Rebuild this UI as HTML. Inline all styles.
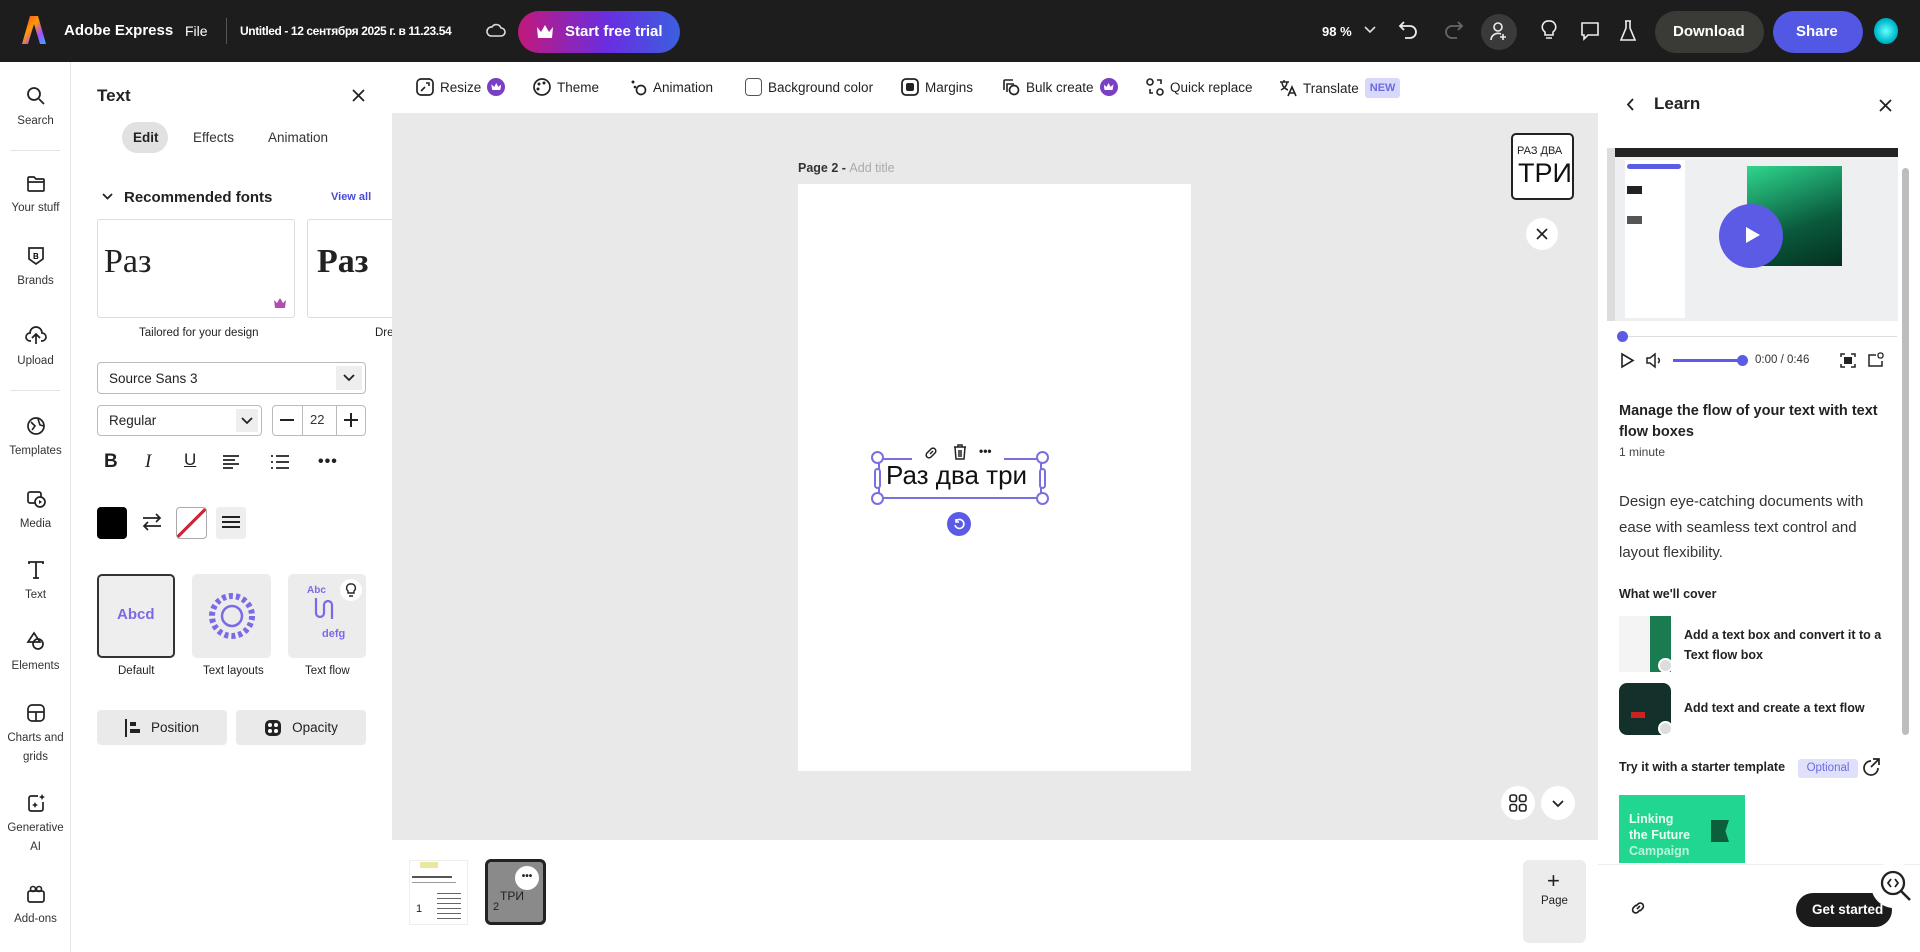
<!DOCTYPE html>
<html><head><meta charset="utf-8">
<style>
*{box-sizing:border-box;margin:0;padding:0}
body{width:1920px;height:952px;overflow:hidden;background:#fff;font-family:"Liberation Sans","DejaVu Sans",sans-serif;color:#222;position:relative}
.a{position:absolute}
.top{left:0;top:0;width:1920px;height:62px;background:#1d1d1d}
.tw{color:#fff;font-size:15px;font-weight:bold;white-space:nowrap}
.rail{left:0;top:62px;width:71px;height:890px;background:#fff;border-right:1px solid #e6e6e6}
.ri{position:absolute;left:0;width:71px;text-align:center;font-size:11.5px;color:#333;line-height:19px}
.ri svg{display:block;margin:0 auto 6px}
.panel{left:71px;top:62px;width:321px;height:890px;background:#fff}
.tb{left:392px;top:62px;width:1206px;height:51px;background:#fff}
.ti{position:absolute;top:15px;font-size:13.5px;color:#222;white-space:nowrap;display:flex;align-items:center;gap:6px}
.crown{width:18px;height:18px;border-radius:50%;background:#7b3fc4;display:inline-block;position:relative}
.crown:after{content:"";position:absolute;left:4px;top:5px;width:10px;height:7px;background:#fff;clip-path:polygon(0 20%,30% 55%,50% 0,70% 55%,100% 20%,90% 100%,10% 100%)}
.btn{background:#eaeaea;border-radius:4px;font-size:13.5px;display:flex;align-items:center;justify-content:center;gap:10px}
.sel{border:1px solid #bbb;border-radius:4px;font-size:13.5px;padding-left:11px;display:flex;align-items:center}
svg{overflow:visible}
</style></head><body>

<!-- TOP BAR -->
<div class="a top"></div>
<svg class="a" style="left:22px;top:16px" width="24" height="28" viewBox="0 0 24 28"><defs><linearGradient id="lg" x1="0" y1="0" x2="1" y2="1"><stop offset="0" stop-color="#ff3b3b"/><stop offset=".4" stop-color="#ff9b00"/><stop offset=".7" stop-color="#a64bff"/><stop offset="1" stop-color="#2bb4ff"/></linearGradient></defs><path d="M8 0h8l8 28h-6l-6-20-6 20H0z" fill="url(#lg)"/></svg>
<div class="a tw" style="left:64px;top:22px;font-size:15px">Adobe Express</div>
<div class="a tw" style="left:185px;top:23px;font-weight:normal;font-size:14px">File</div>
<div class="a" style="left:226px;top:18px;width:1px;height:26px;background:#555"></div>
<div class="a tw" style="left:240px;top:24px;font-size:12px;letter-spacing:-0.4px">Untitled - 12 сентября 2025 г. в 11.23.54</div>
<svg class="a" style="left:486px;top:22px" width="20" height="16" viewBox="0 0 20 16"><path d="M5 14h10a4 4 0 0 0 0-8 5 5 0 0 0-9-1A4.5 4.5 0 0 0 5 14z" fill="none" stroke="#ddd" stroke-width="1.6"/></svg>
<div class="a" style="left:518px;top:11px;width:162px;height:42px;border-radius:21px;background:linear-gradient(90deg,#c2197a,#6a2de0 55%,#3b5fe0)"></div>
<svg class="a" style="left:536px;top:24px" width="18" height="15" viewBox="0 0 18 15"><path d="M1 3l4 5 4-7 4 7 4-5-1 11H2z" fill="#fff"/></svg>
<div class="a tw" style="left:565px;top:23px">Start free trial</div>

<div class="a tw" style="left:1322px;top:24px;font-size:13px">98 %</div>
<svg class="a" style="left:1364px;top:26px" width="12" height="8"><path d="M1 1l5 5 5-5" stroke="#ddd" stroke-width="1.6" fill="none"/></svg>
<svg class="a" style="left:1399px;top:20px" width="20" height="22" viewBox="0 0 20 22"><path d="M5 2L1 6l4 4M1 6h10a6 6 0 0 1 0 12H6" stroke="#eee" stroke-width="1.8" fill="none"/></svg>
<svg class="a" style="left:1443px;top:20px" width="20" height="22" viewBox="0 0 20 22"><path d="M15 2l4 4-4 4M19 6H9a6 6 0 0 0 0 12h5" stroke="#666" stroke-width="1.8" fill="none"/></svg>
<div class="a" style="left:1481px;top:14px;width:36px;height:36px;border-radius:50%;background:#3a3a3a"></div>
<svg class="a" style="left:1490px;top:22px" width="18" height="20" viewBox="0 0 18 20"><circle cx="8" cy="5" r="4" stroke="#eee" stroke-width="1.6" fill="none"/><path d="M1 18a7 7 0 0 1 10-6M13 12v6M10 15h6" stroke="#eee" stroke-width="1.6" fill="none"/></svg>
<svg class="a" style="left:1541px;top:20px" width="16" height="22" viewBox="0 0 16 22"><path d="M8 1a6 6 0 0 0-4 11v3h8v-3A6 6 0 0 0 8 1zM5 18h6" stroke="#eee" stroke-width="1.6" fill="none"/></svg>
<svg class="a" style="left:1580px;top:21px" width="20" height="20" viewBox="0 0 20 20"><path d="M2 2h16v12H8l-4 4v-4H2z" stroke="#eee" stroke-width="1.6" fill="none"/></svg>
<svg class="a" style="left:1620px;top:20px" width="16" height="22" viewBox="0 0 16 22"><path d="M5 1h6M6 1v7L1 20h14L10 8V1" stroke="#eee" stroke-width="1.6" fill="none"/></svg>
<div class="a" style="left:1655px;top:11px;width:109px;height:42px;border-radius:21px;background:#3a3a36"></div>
<div class="a tw" style="left:1673px;top:23px;font-weight:bold">Download</div>
<div class="a" style="left:1773px;top:11px;width:90px;height:42px;border-radius:21px;background:#5258e4"></div>
<div class="a tw" style="left:1796px;top:23px">Share</div>
<div class="a" style="left:1874px;top:18px;width:24px;height:26px;border-radius:50%;background:radial-gradient(circle,#6ff 0,#0bc 60%,#08a)"></div>

<!-- LEFT RAIL -->
<div class="a rail">
 <div class="ri" style="top:24px"><svg width="20" height="20" viewBox="0 0 20 20"><circle cx="8" cy="8" r="6" stroke="#222" stroke-width="1.8" fill="none"/><path d="M13 13l5 5" stroke="#222" stroke-width="1.8"/></svg>Search</div>
 <div class="a" style="left:10px;top:88px;width:50px;height:1px;background:#e3e3e3"></div>
 <div class="ri" style="top:113px"><svg width="20" height="18" viewBox="0 0 20 18"><path d="M2 3a1 1 0 0 1 1-1h5l2 2h7a1 1 0 0 1 1 1v10a1 1 0 0 1-1 1H3a1 1 0 0 1-1-1zM2 7h16" stroke="#222" stroke-width="1.7" fill="none"/></svg>Your stuff</div>
 <div class="ri" style="top:184px"><svg width="18" height="20" viewBox="0 0 18 20"><path d="M2 2h14v11l-7 5-7-5z" stroke="#222" stroke-width="1.7" fill="none"/><text x="6" y="13" font-size="8" font-weight="bold" font-family="Liberation Sans">B</text></svg>Brands</div>
 <div class="ri" style="top:264px"><svg width="22" height="20" viewBox="0 0 22 20"><path d="M6 15H5a4 4 0 0 1 0-8 6 6 0 0 1 12 0 4 4 0 0 1 0 8h-1M11 18V9M7 12l4-4 4 4" stroke="#222" stroke-width="1.7" fill="none"/></svg>Upload</div>
 <div class="a" style="left:10px;top:328px;width:50px;height:1px;background:#e3e3e3"></div>
 <div class="ri" style="top:354px"><svg width="20" height="20" viewBox="0 0 20 20"><circle cx="10" cy="10" r="8" stroke="#222" stroke-width="1.7" fill="none"/><path d="M5 6l4 4-3 4M12 3l2 6 4 1" stroke="#222" stroke-width="1.6" fill="none"/></svg>Templates</div>
 <div class="ri" style="top:427px"><svg width="20" height="20" viewBox="0 0 20 20"><rect x="2" y="3" width="13" height="11" rx="2" stroke="#222" stroke-width="1.7" fill="none"/><circle cx="14" cy="13" r="5" fill="#fff" stroke="#222" stroke-width="1.7"/><path d="M13 11v4l3-2z" fill="#222"/></svg>Media</div>
 <div class="ri" style="top:498px"><svg width="18" height="20" viewBox="0 0 18 20"><path d="M2 4V2h14v2M9 2v16M6 18h6" stroke="#222" stroke-width="1.8" fill="none"/></svg>Text</div>
 <div class="ri" style="top:569px"><svg width="20" height="20" viewBox="0 0 20 20"><path d="M8 2l6 9H2z" stroke="#222" stroke-width="1.7" fill="none"/><circle cx="12" cy="13" r="5" stroke="#222" stroke-width="1.7" fill="none"/></svg>Elements</div>
 <div class="ri" style="top:641px"><svg width="20" height="20" viewBox="0 0 20 20"><rect x="2" y="2" width="16" height="16" rx="4" stroke="#222" stroke-width="1.7" fill="none"/><path d="M2 9h16M10 9v9" stroke="#222" stroke-width="1.7"/></svg>Charts and<br>grids</div>
 <div class="ri" style="top:731px"><svg width="20" height="20" viewBox="0 0 20 20"><path d="M12 3H5a2 2 0 0 0-2 2v11a2 2 0 0 0 2 2h10a2 2 0 0 0 2-2V9" stroke="#222" stroke-width="1.7" fill="none"/><path d="M16 1l1 2 2 1-2 1-1 2-1-2-2-1 2-1zM9 9l1 2 2 1-2 1-1 2-1-2-2-1 2-1z" fill="#222"/></svg>Generative<br>AI</div>
 <div class="ri" style="top:822px"><svg width="20" height="20" viewBox="0 0 20 20"><rect x="2" y="7" width="16" height="11" rx="2" stroke="#222" stroke-width="1.7" fill="none"/><circle cx="7" cy="5" r="2.5" stroke="#222" stroke-width="1.6" fill="none"/><circle cx="13" cy="5" r="2.5" stroke="#222" stroke-width="1.6" fill="none"/></svg>Add-ons</div>
</div>

<!-- TEXT PANEL -->
<div class="a panel"></div>
<div class="a" style="left:97px;top:86px;font-size:17px;font-weight:bold">Text</div>
<svg class="a" style="left:352px;top:89px" width="13" height="13"><path d="M1 1l11 11M12 1L1 12" stroke="#222" stroke-width="1.8"/></svg>
<div class="a" style="left:122px;top:122px;width:46px;height:31px;border-radius:16px;background:#e1e1e1"></div>
<div class="a" style="left:133px;top:130px;font-size:13.5px;font-weight:bold">Edit</div>
<div class="a" style="left:193px;top:130px;font-size:13.5px;color:#333">Effects</div>
<div class="a" style="left:268px;top:130px;font-size:13.5px;color:#333">Animation</div>
<svg class="a" style="left:102px;top:193px" width="11" height="8"><path d="M1 1l4.5 4.5L10 1" stroke="#222" stroke-width="1.8" fill="none"/></svg>
<div class="a" style="left:124px;top:189px;font-size:15px;font-weight:bold">Recommended fonts</div>
<div class="a" style="left:331px;top:191px;font-size:11px;font-weight:bold;color:#4a4ad8">View all</div>
<div class="a" style="left:97px;top:219px;width:198px;height:99px;border:1px solid #ddd;border-radius:3px"></div>
<div class="a" style="left:104px;top:243px;font-family:'Liberation Serif',serif;font-size:34px">Раз</div>
<svg class="a" style="left:274px;top:298px" width="13" height="10"><path d="M0 2l3 3 3-5 3 5 3-3-1 8H1z" fill="#b04fb0"/></svg>
<div class="a" style="left:307px;top:219px;width:90px;height:99px;border:1px solid #ddd;border-radius:3px"></div>
<div class="a" style="left:317px;top:243px;font-family:'Liberation Serif',serif;font-size:34px;font-weight:bold">Раз</div>
<div class="a" style="left:392px;top:113px;width:8px;height:727px;background:#fff"></div>
<div class="a" style="left:139px;top:327px;font-size:11.5px;color:#222">Tailored for your design</div>
<div class="a" style="left:375px;top:327px;font-size:11.5px;color:#222">Dre</div>
<div class="a sel" style="left:97px;top:362px;width:269px;height:32px">Source Sans 3</div>
<div class="a" style="left:336px;top:366px;width:26px;height:24px;background:#eee"></div>
<svg class="a" style="left:343px;top:374px" width="12" height="8"><path d="M1 1l5 5 5-5" stroke="#222" stroke-width="1.8" fill="none"/></svg>
<div class="a sel" style="left:97px;top:405px;width:165px;height:31px">Regular</div>
<div class="a" style="left:236px;top:409px;width:22px;height:23px;background:#eee"></div>
<svg class="a" style="left:241px;top:417px" width="12" height="8"><path d="M1 1l5 5 5-5" stroke="#222" stroke-width="1.8" fill="none"/></svg>
<div class="a" style="left:272px;top:405px;width:94px;height:31px;border:1px solid #bbb;border-radius:4px"></div>
<div class="a" style="left:302px;top:405px;width:1px;height:31px;background:#bbb"></div>
<div class="a" style="left:336px;top:405px;width:1px;height:31px;background:#bbb"></div>
<div class="a" style="left:280px;top:419px;width:14px;height:2px;background:#222"></div>
<div class="a" style="left:310px;top:412px;font-size:13px;color:#333">22</div>
<div class="a" style="left:344px;top:419px;width:14px;height:2px;background:#222"></div>
<div class="a" style="left:350px;top:413px;width:2px;height:14px;background:#222"></div>
<div class="a" style="left:104px;top:451px;font-size:19px;font-weight:bold">B</div>
<div class="a" style="left:145px;top:451px;font-size:19px;font-style:italic;font-family:'Liberation Serif',serif">I</div>
<div class="a" style="left:184px;top:450px;font-size:17px;text-decoration:underline">U</div>
<svg class="a" style="left:223px;top:455px" width="16" height="14"><path d="M0 1h16M0 5h12M0 9h16M0 13h10" stroke="#222" stroke-width="1.8"/></svg>
<svg class="a" style="left:271px;top:455px" width="18" height="14"><path d="M0 1h2M5 1h13M0 7h2M5 7h13M0 13h2M5 13h13" stroke="#222" stroke-width="1.8"/></svg>
<div class="a" style="left:318px;top:453px;font-size:16px;font-weight:bold;letter-spacing:1px">•••</div>
<div class="a" style="left:97px;top:507px;width:30px;height:32px;background:#000;border-radius:4px"></div>
<svg class="a" style="left:142px;top:513px" width="20" height="18"><path d="M1 5h17M14 1l4 4-4 4M19 13H2M6 9l-4 4 4 4" stroke="#222" stroke-width="1.7" fill="none"/></svg>
<div class="a" style="left:176px;top:507px;width:31px;height:32px;border:1px solid #aaa;border-radius:4px;overflow:hidden;background:linear-gradient(45deg,transparent 46%,#d0253a 46%,#d0253a 54%,transparent 54%);transform:scaleX(-1)"></div>
<div class="a" style="left:216px;top:507px;width:30px;height:32px;background:#eee;border-radius:3px"></div>
<svg class="a" style="left:222px;top:516px" width="18" height="12"><path d="M0 1h18M0 6h18M0 11h18" stroke="#222" stroke-width="2"/></svg>
<div class="a" style="left:97px;top:574px;width:78px;height:84px;border:2px solid #333;border-radius:5px;background:#eeeeee"></div>
<div class="a" style="left:117px;top:606px;font-size:15px;font-weight:bold;color:#7b6ae6">Abcd</div>
<div class="a" style="left:192px;top:574px;width:79px;height:84px;background:#ececec;border-radius:5px"></div>
<svg class="a" style="left:207px;top:587px" width="50" height="58" viewBox="0 0 50 58"><circle cx="25" cy="29" r="10" stroke="#7b6ae6" stroke-width="2.5" fill="none"/><circle cx="25" cy="29" r="20" stroke="#7b6ae6" stroke-width="6" stroke-dasharray="4 3" fill="none"/></svg>
<div class="a" style="left:288px;top:574px;width:78px;height:84px;background:#ececec;border-radius:5px"></div>
<div class="a" style="left:307px;top:585px;font-size:10px;font-weight:bold;color:#7b6ae6">Abc</div>
<svg class="a" style="left:314px;top:598px" width="20" height="30"><path d="M2 0v15a4 4 0 0 0 8 0v-8a4 4 0 0 1 8 0v14" stroke="#7b6ae6" stroke-width="2.2" fill="none"/></svg>
<div class="a" style="left:322px;top:628px;font-size:11px;font-weight:bold;color:#7b6ae6">defg</div>
<div class="a" style="left:340px;top:579px;width:22px;height:22px;border-radius:50%;background:#fff"></div>
<svg class="a" style="left:346px;top:583px" width="10" height="14"><path d="M5 1a4 4 0 0 0-3 7v2h6V8a4 4 0 0 0-3-7zM3 13h4" stroke="#222" stroke-width="1.4" fill="none"/></svg>
<div class="a" style="left:118px;top:665px;font-size:11.5px">Default</div>
<div class="a" style="left:203px;top:665px;font-size:11.5px">Text layouts</div>
<div class="a" style="left:305px;top:665px;font-size:11.5px">Text flow</div>
<div class="a btn" style="left:97px;top:710px;width:130px;height:35px"><svg width="16" height="18"><path d="M1 0v18" stroke="#222" stroke-width="2"/><rect x="5" y="3" width="6" height="4" fill="#222"/><rect x="5" y="10" width="10" height="4" fill="#222"/></svg>Position</div>
<div class="a btn" style="left:236px;top:710px;width:130px;height:35px"><svg width="18" height="18"><rect x="1" y="1" width="16" height="16" rx="5" fill="#222"/><circle cx="6" cy="6" r="2" fill="#fff"/><circle cx="12" cy="6" r="2" fill="#fff"/><circle cx="6" cy="12" r="2" fill="#fff"/><circle cx="12" cy="12" r="2" fill="#fff"/></svg>Opacity</div>

<!-- TOOLBAR -->
<div class="a tb"></div>
<div class="ti" style="left:416px;top:78px"><svg width="18" height="18"><rect x="1" y="1" width="16" height="16" rx="4" stroke="#222" stroke-width="1.7" fill="none"/><path d="M5 13l4-4M10 5h3v3" stroke="#222" stroke-width="1.6" fill="none"/></svg>Resize<span class="crown"></span></div>
<div class="ti" style="left:533px;top:78px"><svg width="18" height="18"><circle cx="9" cy="9" r="8" stroke="#222" stroke-width="1.7" fill="none"/><circle cx="6" cy="6" r="1.5" fill="#222"/><circle cx="11" cy="5" r="1.5" fill="#222"/><circle cx="5" cy="11" r="1.5" fill="#222"/></svg>Theme</div>
<div class="ti" style="left:629px;top:78px"><svg width="18" height="18"><circle cx="12" cy="12" r="4.5" stroke="#222" stroke-width="1.7" fill="none"/><circle cx="4" cy="4" r="1.5" fill="#222"/><circle cx="6" cy="9" r="1.3" fill="#222"/></svg>Animation</div>
<div class="ti" style="left:745px;top:78px"><span style="width:17px;height:18px;border:1.7px solid #555;border-radius:4px;display:inline-block"></span>Background color</div>
<div class="ti" style="left:901px;top:78px"><svg width="18" height="18"><rect x="1" y="1" width="16" height="16" rx="4" stroke="#222" stroke-width="1.8" fill="none"/><rect x="5" y="5" width="8" height="8" rx="2" fill="#222"/></svg>Margins</div>
<div class="ti" style="left:1002px;top:78px"><svg width="18" height="18"><path d="M2 12V3a1 1 0 0 1 1-1h8M5 14V6h7" stroke="#222" stroke-width="1.6" fill="none"/><circle cx="12" cy="12" r="4.5" stroke="#222" stroke-width="1.7" fill="none"/></svg>Bulk create<span class="crown"></span></div>
<div class="ti" style="left:1146px;top:78px"><svg width="18" height="18"><circle cx="4" cy="4" r="3" stroke="#222" stroke-width="1.6" fill="none"/><circle cx="14" cy="14" r="3" stroke="#222" stroke-width="1.6" fill="none"/><path d="M11 2h4v4M4 11v4h3" stroke="#222" stroke-width="1.6" fill="none"/></svg>Quick replace</div>
<div class="ti" style="left:1279px;top:78px"><svg width="18" height="18"><path d="M1 3h9M5 1v2M3 3c0 4 3 7 6 8M8 3c0 3-2 6-6 8" stroke="#222" stroke-width="1.5" fill="none"/><path d="M9 17l4-9 4 9M10 14h6" stroke="#222" stroke-width="1.6" fill="none"/></svg>Translate<span style="background:#d8d8fb;color:#6a6ae6;font-size:11px;font-weight:bold;padding:4px 5px;border-radius:3px">NEW</span></div>

<!-- CANVAS -->
<div class="a" style="left:392px;top:113px;width:1206px;height:727px;background:#e9e9e9"></div>
<div class="a" style="left:798px;top:161px;font-size:12.5px;font-weight:bold;color:#333">Page 2 - <span style="font-weight:normal;color:#aaa">Add title</span></div>
<div class="a" style="left:798px;top:184px;width:393px;height:587px;background:#fff"></div>
<div class="a" style="left:878px;top:458px;width:164px;height:41px;border:2px solid #7a6fe0"></div>
<div class="a" style="left:912px;top:441px;width:92px;height:26px;background:#fff;border-radius:4px"></div>
<svg class="a" style="left:924px;top:446px" width="14" height="14"><path d="M6 8l3-3M5 5L3 7a2.5 2.5 0 0 0 4 4l2-2M9 9l2-2a2.5 2.5 0 0 0-4-4L5 5" stroke="#222" stroke-width="1.5" fill="none"/></svg>
<svg class="a" style="left:953px;top:444px" width="14" height="16"><path d="M1 3h12M5 3V1h4v2M2 3l1 12h8l1-12M6 6v7M8 6v7" stroke="#222" stroke-width="1.5" fill="none"/></svg>
<div class="a" style="left:979px;top:444px;font-size:12px;font-weight:bold">•••</div>
<div class="a" style="left:886px;top:460px;font-size:26px;color:#111">Раз два три</div>
<div class="a" style="left:871px;top:451px;width:13px;height:13px;border-radius:50%;border:2px solid #7a6fe0;background:#fff"></div>
<div class="a" style="left:1036px;top:451px;width:13px;height:13px;border-radius:50%;border:2px solid #7a6fe0;background:#fff"></div>
<div class="a" style="left:871px;top:492px;width:13px;height:13px;border-radius:50%;border:2px solid #7a6fe0;background:#fff"></div>
<div class="a" style="left:1036px;top:492px;width:13px;height:13px;border-radius:50%;border:2px solid #7a6fe0;background:#fff"></div>
<div class="a" style="left:874px;top:468px;width:7px;height:21px;border-radius:4px;border:2px solid #7a6fe0;background:#fff"></div>
<div class="a" style="left:1039px;top:468px;width:7px;height:21px;border-radius:4px;border:2px solid #7a6fe0;background:#fff"></div>
<div class="a" style="left:947px;top:512px;width:24px;height:24px;border-radius:50%;background:#5b5be6"></div>
<svg class="a" style="left:953px;top:518px" width="12" height="12"><path d="M3 3a4.5 4.5 0 1 1-1 4M3 1v3h3" stroke="#fff" stroke-width="1.6" fill="none"/></svg>
<div class="a" style="left:1511px;top:133px;width:63px;height:67px;border:2px solid #222;border-radius:5px;background:#fff"></div>
<div class="a" style="left:1517px;top:145px;font-size:11px;color:#222">РАЗ ДВА</div>
<div class="a" style="left:1518px;top:158px;font-size:27px;color:#111">ТРИ</div>
<div class="a" style="left:1526px;top:218px;width:32px;height:32px;border-radius:50%;background:#fff"></div>
<svg class="a" style="left:1536px;top:228px" width="12" height="12"><path d="M1 1l10 10M11 1L1 11" stroke="#222" stroke-width="1.7"/></svg>
<div class="a" style="left:1501px;top:786px;width:34px;height:34px;border-radius:50%;background:#fff"></div>
<svg class="a" style="left:1509px;top:794px" width="18" height="18"><rect x="1" y="1" width="6.5" height="6.5" rx="2" stroke="#222" stroke-width="1.6" fill="none"/><rect x="10.5" y="1" width="6.5" height="6.5" rx="2" stroke="#222" stroke-width="1.6" fill="none"/><rect x="1" y="10.5" width="6.5" height="6.5" rx="2" stroke="#222" stroke-width="1.6" fill="none"/><rect x="10.5" y="10.5" width="6.5" height="6.5" rx="2" stroke="#222" stroke-width="1.6" fill="none"/></svg>
<div class="a" style="left:1541px;top:786px;width:34px;height:34px;border-radius:50%;background:#fff"></div>
<svg class="a" style="left:1552px;top:800px" width="12" height="8"><path d="M1 1l5 5 5-5" stroke="#222" stroke-width="1.8" fill="none"/></svg>

<!-- PAGES STRIP -->
<div class="a" style="left:409px;top:860px;width:59px;height:65px;background:#fff;border:1px solid #eee"></div>
<div class="a" style="left:420px;top:862px;width:18px;height:6px;background:#e8e8a0"></div>
<div class="a" style="left:412px;top:876px;width:40px;height:2px;background:#555"></div>
<div class="a" style="left:412px;top:882px;width:44px;height:1px;background:#999"></div>
<div class="a" style="left:437px;top:893px;width:24px;height:28px;background:repeating-linear-gradient(#666 0 1px,transparent 1px 5px)"></div>
<div class="a" style="left:416px;top:903px;font-size:11px">1</div>
<div class="a" style="left:485px;top:859px;width:61px;height:66px;border:3px solid #222;border-radius:6px;background:#8a8a8a"></div>
<div class="a" style="left:515px;top:866px;width:24px;height:24px;border-radius:50%;background:#fff;font-size:10px;font-weight:bold;text-align:center;line-height:22px">•••</div>
<div class="a" style="left:500px;top:889px;font-size:12px;color:#222">ТРИ</div>
<div class="a" style="left:493px;top:901px;font-size:11px;color:#222">2</div>
<div class="a" style="left:1523px;top:860px;width:63px;height:83px;background:#ececec;border-radius:6px"></div>
<div class="a" style="left:1547px;top:868px;font-size:22px">+</div>
<div class="a" style="left:1541px;top:895px;font-size:11.5px">Page</div>

<!-- RIGHT PANEL -->
<div class="a" style="left:1598px;top:62px;width:322px;height:890px;background:#fff"></div>
<svg class="a" style="left:1626px;top:98px" width="8" height="13"><path d="M7 1L2 6.5 7 12" stroke="#222" stroke-width="1.8" fill="none"/></svg>
<div class="a" style="left:1654px;top:94px;font-size:17px;font-weight:bold">Learn</div>
<svg class="a" style="left:1879px;top:99px" width="13" height="13"><path d="M1 1l11 11M12 1L1 12" stroke="#222" stroke-width="1.8"/></svg>
<div class="a" style="left:1607px;top:148px;width:291px;height:173px;background:#eeeff1;overflow:hidden">
 <div class="a" style="left:0;top:0;width:291px;height:9px;background:#222"></div>
 <div class="a" style="left:18px;top:12px;width:60px;height:158px;background:#fff"></div>
 <div class="a" style="left:20px;top:16px;width:54px;height:5px;border-radius:3px;background:#5b5be6"></div>
 <div class="a" style="left:20px;top:38px;width:15px;height:8px;background:#222"></div>
 <div class="a" style="left:20px;top:68px;width:15px;height:8px;background:#555"></div>
 <div class="a" style="left:140px;top:18px;width:95px;height:100px;background:linear-gradient(160deg,#2fd68e,#0a5a3c 60%,#04301f)"></div>
 <div class="a" style="left:0;top:0;width:8px;height:173px;background:#ddd"></div>
</div>
<div class="a" style="left:1719px;top:204px;width:64px;height:64px;border-radius:50%;background:#5b5be6"></div>
<svg class="a" style="left:1745px;top:226px" width="16" height="18"><path d="M1 1l14 8-14 8z" fill="#fff"/></svg>
<div class="a" style="left:1902px;top:168px;width:7px;height:567px;border-radius:4px;background:#bdbdbd"></div>
<div class="a" style="left:1622px;top:336px;width:275px;height:1px;background:#ddd"></div>
<div class="a" style="left:1617px;top:331px;width:11px;height:11px;border-radius:50%;background:#5b5be6"></div>
<svg class="a" style="left:1620px;top:353px" width="14" height="15"><path d="M2 1l11 6.5L2 14z" stroke="#222" stroke-width="1.6" fill="none"/></svg>
<svg class="a" style="left:1646px;top:353px" width="18" height="15"><path d="M1 5h3l5-4v13l-5-4H1zM12 5a3 3 0 0 1 0 5" stroke="#222" stroke-width="1.5" fill="none"/></svg>
<div class="a" style="left:1673px;top:359px;width:70px;height:3px;background:#5b5be6"></div>
<div class="a" style="left:1737px;top:355px;width:11px;height:11px;border-radius:50%;background:#5b5be6"></div>
<div class="a" style="left:1755px;top:354px;font-size:11.5px;color:#333">0:00 / 0:46</div>
<svg class="a" style="left:1840px;top:353px" width="16" height="15"><path d="M1 4V1h4M11 1h4v3M15 11v3h-4M5 14H1v-3" stroke="#222" stroke-width="1.5" fill="none"/><rect x="4" y="4" width="8" height="7" fill="#222"/></svg>
<svg class="a" style="left:1868px;top:352px" width="16" height="15"><path d="M8 3H1v11h13V9" stroke="#222" stroke-width="1.5" fill="none"/><rect x="10" y="1" width="5" height="5" rx="2" stroke="#222" stroke-width="1.3" fill="none"/></svg>
<div class="a" style="left:1619px;top:401px;width:270px;font-size:14.5px;font-weight:bold;line-height:21px">Manage the flow of your text with text flow boxes</div>
<div class="a" style="left:1619px;top:445px;font-size:12px;color:#444">1 minute</div>
<div class="a" style="left:1619px;top:489px;width:280px;font-size:15px;line-height:25.5px;color:#333">Design eye-catching documents with ease with seamless text control and layout flexibility.</div>
<div class="a" style="left:1619px;top:587px;font-size:12.5px;font-weight:bold">What we'll cover</div>
<div class="a" style="left:1619px;top:616px;width:52px;height:56px;background:linear-gradient(90deg,#f4f4f4 60%,#1a7a50 60%)"></div>
<div class="a" style="left:1658px;top:658px;width:15px;height:15px;border-radius:50%;background:#ddd;border:2px solid #fff"></div>
<div class="a" style="left:1684px;top:625px;width:210px;font-size:12.5px;font-weight:bold;line-height:20px">Add a text box and convert it to a Text flow box</div>
<div class="a" style="left:1619px;top:683px;width:52px;height:52px;border-radius:8px;background:#13302a"></div>
<div class="a" style="left:1631px;top:712px;width:14px;height:6px;background:#c22"></div>
<div class="a" style="left:1658px;top:721px;width:15px;height:15px;border-radius:50%;background:#ddd;border:2px solid #fff"></div>
<div class="a" style="left:1684px;top:701px;font-size:12.5px;font-weight:bold">Add text and create a text flow</div>
<div class="a" style="left:1619px;top:760px;font-size:12.5px;font-weight:bold">Try it with a starter template</div>
<div class="a" style="left:1798px;top:759px;width:60px;height:19px;background:#e0e0fb;border-radius:3px;color:#6a6ae6;font-size:11.5px;text-align:center;line-height:19px">Optional</div>
<svg class="a" style="left:1862px;top:758px" width="18" height="18"><path d="M9 3a7 7 0 1 0 7 7M11 1h6v6M17 1l-8 8" stroke="#222" stroke-width="1.7" fill="none"/></svg>
<div class="a" style="left:1619px;top:795px;width:126px;height:68px;background:#21d68f"></div>
<div class="a" style="left:1629px;top:811px;font-size:12.5px;line-height:16px;color:#e8fff4;font-weight:bold">Linking<br>the Future<br><span style="color:#b8f5dc">Campaign</span></div>
<div class="a" style="left:1711px;top:820px;width:18px;height:22px;background:#0b5f3b;clip-path:polygon(0 0,100% 0,80% 50%,100% 100%,0 100%)"></div>
<div class="a" style="left:1598px;top:864px;width:322px;height:88px;background:#fff;border-top:1px solid #eee"></div>
<svg class="a" style="left:1630px;top:900px" width="16" height="16"><path d="M7 9l3-3M6 5L3.5 7.5a3 3 0 0 0 4.5 4.5L10 10M10 11l2.5-2.5A3 3 0 0 0 8 4L6 6" stroke="#222" stroke-width="1.6" fill="none"/></svg>
<div class="a" style="left:1796px;top:893px;width:96px;height:34px;border-radius:17px;background:#1b1b1b;color:#fff;font-size:13.5px;font-weight:bold;line-height:34px;padding-left:16px;white-space:nowrap;overflow:hidden">Get started</div>
<div class="a" style="left:1871px;top:862px;width:46px;height:46px;border-radius:50%;background:#fff"></div>
<svg class="a" style="left:1878px;top:868px" width="34" height="34"><circle cx="15" cy="15" r="11" stroke="#222" stroke-width="2.3" fill="none"/><path d="M23 23l9 9" stroke="#222" stroke-width="2.5"/><path d="M13 11l-3 4 3 4M17 11l3 4-3 4" stroke="#222" stroke-width="1.8" fill="none"/></svg>
</body></html>
